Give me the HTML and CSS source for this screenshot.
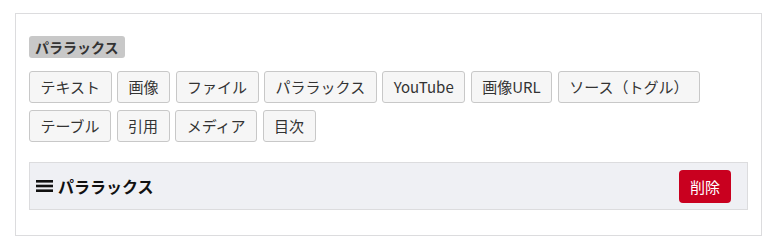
FILE: index.html
```html
<!DOCTYPE html>
<html lang="ja">
<head>
    <meta charset="UTF-8">
    <meta name="viewport" content="width=device-width, initial-scale=1.0">
    <title>パララックス</title>
    <link rel="stylesheet" href="styles.css">
</head>
<body>
    <div class="editor">
        <span class="tag">パララックス</span>

        <!-- block insert buttons -->
        <div class="toolbar">
            <button>テキスト</button>
            <button>画像</button>
            <button>ファイル</button>
            <button>パララックス</button>
            <button>YouTube</button>
            <button>画像URL</button>
            <button>ソース（トグル）</button>
            <button>テーブル</button>
            <button>引用</button>
            <button>メディア</button>
            <button>目次</button>
        </div>

        <div class="block-head">
            <svg class="handle" width="17" height="14" viewBox="0 0 17 14">
                <rect x="0" y="1" width="17" height="2.6"/>
                <rect x="0" y="5.7" width="17" height="2.6"/>
                <rect x="0" y="10.4" width="17" height="2.6"/>
            </svg>
            <span class="block-title">パララックス</span>
            <button class="delete">削除</button>
        </div>
    </div>
</body>
</html>
```

FILE: styles.css
```css
body {
    font-family: "Noto Sans CJK JP", "Noto Sans", sans-serif;
    color: #333;
    background-color: #fff;
    margin: 0;
    padding: 13px 13px 0 15px;
}

.editor {
    display: flex;
    flex-direction: column;
    align-items: flex-start;
    border: 1px solid #dcdcde;
    padding: 22px 13px 25px 13px;
}

.tag {
    background-color: #c8c8c8;
    color: #333;
    font-size: 14px;
    font-weight: bold;
    line-height: 22px;
    height: 22px;
    padding: 0 6px;
    border-radius: 3px;
}

.toolbar {
    display: flex;
    flex-wrap: wrap;
    gap: 7px 5.5px;
    margin-top: 13px;
    max-width: 700px;
}

.toolbar button {
    font-family: inherit;
    font-size: 15px;
    color: #333;
    height: 32px;
    margin: 0;
    padding: 0 10.5px;
    background-color: #f6f6f6;
    border: 1px solid #c8c8c8;
    border-radius: 3px;
    line-height: 30px;
    cursor: pointer;
}

.block-head {
    align-self: stretch;
    display: flex;
    align-items: center;
    height: 46px;
    margin-top: 20px;
    padding: 0 16px 0 6px;
    background-color: #eff0f4;
    border: 1px solid #dcdcde;
}

.handle {
    fill: #111;
    margin-right: 5px;
}

.block-title {
    font-size: 16px;
    font-weight: bold;
    color: #111;
    margin-right: auto; /* pushes delete to the right */
}

.delete {
    font-family: inherit;
    font-size: 15px;
    color: #fff;
    background-color: #c9001f;
    border: none;
    border-radius: 4px;
    height: 33px;
    padding: 0 11px;
    cursor: pointer;
}
```
